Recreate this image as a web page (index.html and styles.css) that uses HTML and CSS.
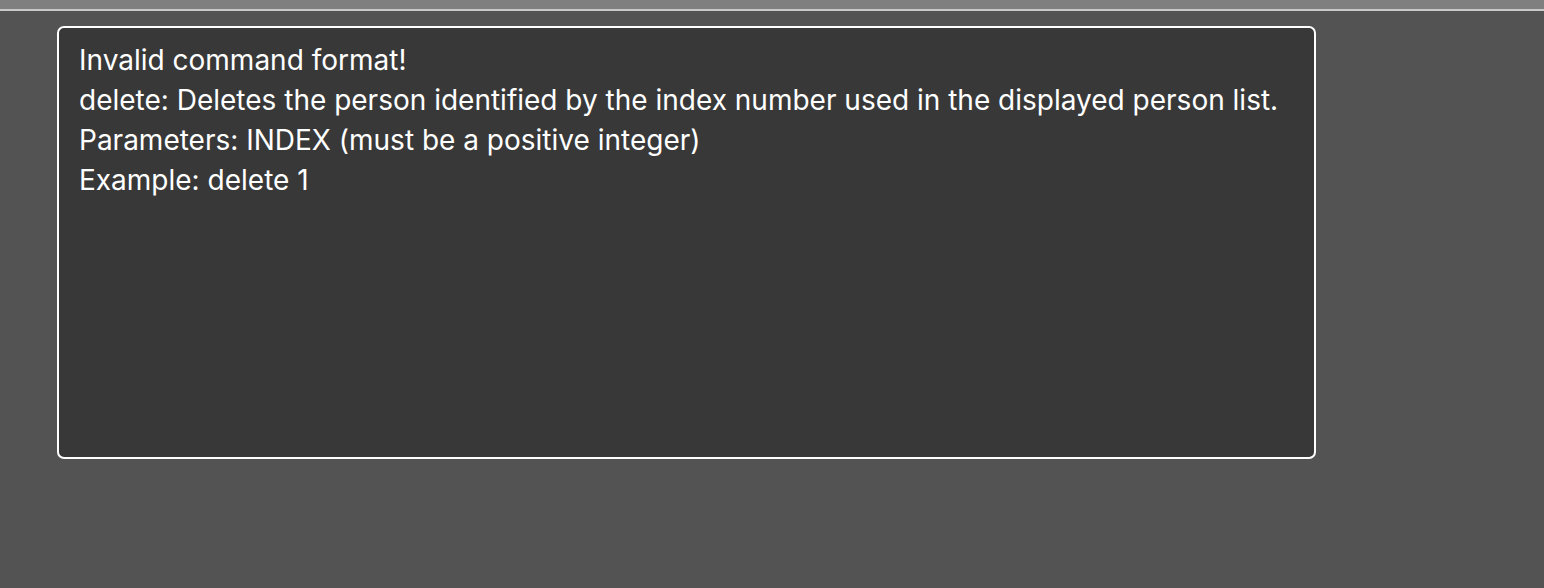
FILE: index.html
```html
<!DOCTYPE html>
<html>
<head>
<meta charset="utf-8">
<link rel="stylesheet" href="styles.css">
</head>
<body>
<div class="topbar"></div>
<div class="main">
  <div class="result">
    <div class="line">Invalid command format!</div>
    <div class="line">delete: Deletes the person identified by the index number used in the displayed person list.</div>
    <div class="line">Parameters: INDEX (must be a positive integer)</div>
    <div class="line">Example: delete 1</div>
  </div>
</div>
</body>
</html>
```
FILE: styles.css
```css
html, body {
  margin: 0;
  padding: 0;
  height: 100%;
  background: #535353;
  font-family: Inter, "Noto Sans", sans-serif;
}
.topbar {
  height: 9px;
  background: #7f7f7f;
  border-bottom: 2px solid #c8c8c8;
}
.main {
  padding: 15px 0 0 57px;
}
.result {
  box-sizing: border-box;
  width: 1259px;
  height: 433px;
  border: 2px solid #ffffff;
  border-radius: 7px;
  background: #383838;
  padding: 12px 20px;
  color: #ffffff;
  font-size: 28px;
  letter-spacing: 0;
}
.line {
  height: 40px;
  line-height: 40px;
  white-space: nowrap;
}
```
